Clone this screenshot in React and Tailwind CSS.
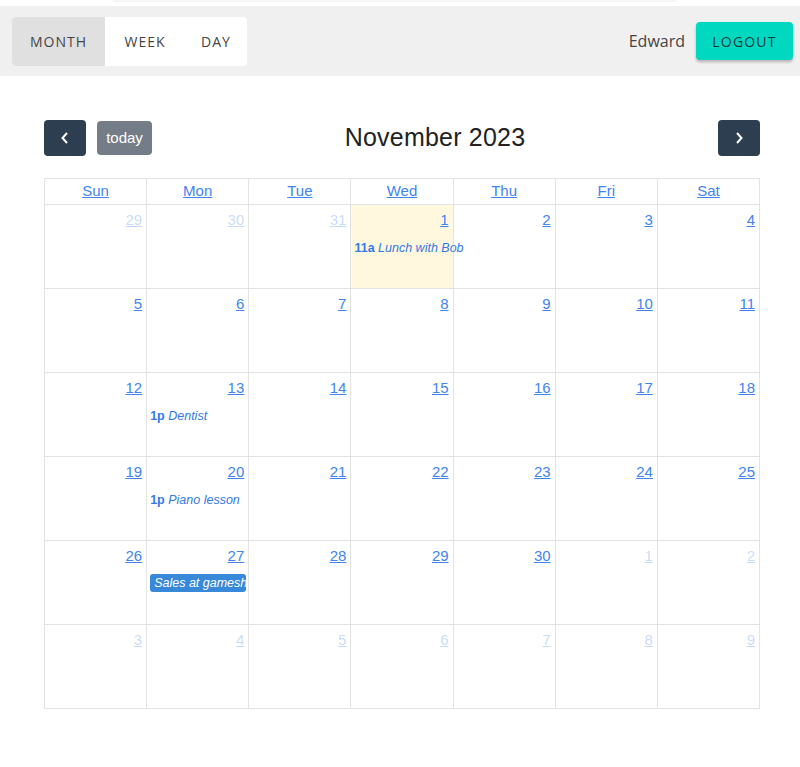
import React from 'react';

const days = ['Sun', 'Mon', 'Tue', 'Wed', 'Thu', 'Fri', 'Sat'];

// 6 weeks, Oct 29 - Dec 9
const weeks = [
  [[29, true], [30, true], [31, true], [1], [2], [3], [4]],
  [[5], [6], [7], [8], [9], [10], [11]],
  [[12], [13], [14], [15], [16], [17], [18]],
  [[19], [20], [21], [22], [23], [24], [25]],
  [[26], [27], [28], [29], [30], [1, true], [2, true]],
  [[3, true], [4, true], [5, true], [6, true], [7, true], [8, true], [9, true]],
];

const events = {
  '0-3': { time: '11a', title: 'Lunch with Bob' },
  '2-1': { time: '1p', title: 'Dentist' },
  '3-1': { time: '1p', title: 'Piano lesson' },
  '4-1': { block: true, title: 'Sales at gameshow' },
};

function DayCell({ num, other, today, event }) {
  return (
    <div
      className={`relative h-[84px] border-r border-b border-[#e3e3e3] ${
        today ? 'bg-[#fff8de]' : 'bg-white'
      }`}
    >
      <div className="flex justify-end pt-[6px] pr-[4px]">
        <a
          href="#"
          className={`text-[15px] leading-[18px] underline ${
            other ? 'text-[#3f84f0]/30' : 'text-[#3f84f0]'
          }`}
        >
          {num}
        </a>
      </div>
      {event && !event.block && (
        <div className="relative z-10 mt-[11px] pl-[3px] text-[12.5px] leading-[16px] text-[#3479e6] whitespace-nowrap">
          <b className="font-bold">{event.time}</b>{' '}
          <i>{event.title}</i>
        </div>
      )}
      {event && event.block && (
        <div className="mt-[9px] ml-[3px] mr-[2px] rounded-[3px] bg-[#3788d8] px-[4px] text-[12.5px] leading-[18px] text-white italic whitespace-nowrap overflow-hidden">
          {event.title}
        </div>
      )}
    </div>
  );
}

export default function App() {
  return (
    <div className="min-h-[767px] bg-white font-['Liberation_Sans',Arial,sans-serif]">
      {/* top strip */}
      <div className="h-[6px] flex">
        <div className="ml-[113px] w-[563px] h-[2px] bg-[#f6f6f6]" />
      </div>

      {/* app bar */}
      <div className="h-[70px] bg-[#f0f0f0] flex items-center justify-between pl-[12px] pr-[7px] font-['Open_Sans',sans-serif]">
        <div className="flex h-[49px] rounded-[4px] bg-white overflow-hidden text-[14px] tracking-[1px] text-[#444]">
          <button className="w-[93px] bg-[#e0e0e0]">MONTH</button>
          <button className="w-[80px]">WEEK</button>
          <button className="w-[62px]">DAY</button>
        </div>
        <div className="flex items-center">
          <span className="text-[16px] text-[#444] mr-[11px]">Edward</span>
          <button className="w-[97px] h-[38px] rounded-[4px] bg-[#00d8c0] text-[14px] tracking-[1.2px] text-[#0b3d38] shadow-[0_2px_3px_rgba(0,0,0,0.25)]">
            LOGOUT
          </button>
        </div>
      </div>

      {/* calendar */}
      <div className="mx-[44px] mt-[44px] w-[716px]">
        <div className="flex items-center justify-between h-[36px] mb-[22px]">
          <div className="flex items-center gap-[11px]">
            <button className="w-[42px] h-[36px] rounded-[4px] bg-[#2c3e50] flex items-center justify-center">
              <svg width="10" height="14" viewBox="0 0 10 14" fill="none">
                <path d="M7 2 L2.5 7 L7 12" stroke="white" strokeWidth="2" />
              </svg>
            </button>
            <button className="w-[55px] h-[34px] rounded-[4px] bg-[#747c87] text-white text-[15px]">
              today
            </button>
          </div>
          <h2 className="text-[25px] text-[#222] tracking-[0.2px]">November 2023</h2>
          <div className="flex justify-end">
            <button className="w-[42px] h-[36px] rounded-[4px] bg-[#2c3e50] flex items-center justify-center">
              <svg width="10" height="14" viewBox="0 0 10 14" fill="none">
                <path d="M3 2 L7.5 7 L3 12" stroke="white" strokeWidth="2" />
              </svg>
            </button>
          </div>
        </div>

        <div className="border-l border-t border-[#e3e3e3]">
          <div className="grid grid-cols-7">
            {days.map((d) => (
              <div
                key={d}
                className="h-[26px] border-r border-b border-[#e3e3e3] flex items-center justify-center"
              >
                <a href="#" className="text-[15px] text-[#3f84f0] underline">
                  {d}
                </a>
              </div>
            ))}
          </div>
          {weeks.map((w, wi) => (
            <div key={wi} className="grid grid-cols-7">
              {w.map(([num, other], di) => (
                <DayCell
                  key={di}
                  num={num}
                  other={other}
                  today={wi === 0 && di === 3}
                  event={events[`${wi}-${di}`]}
                />
              ))}
            </div>
          ))}
        </div>
      </div>
    </div>
  );
}
